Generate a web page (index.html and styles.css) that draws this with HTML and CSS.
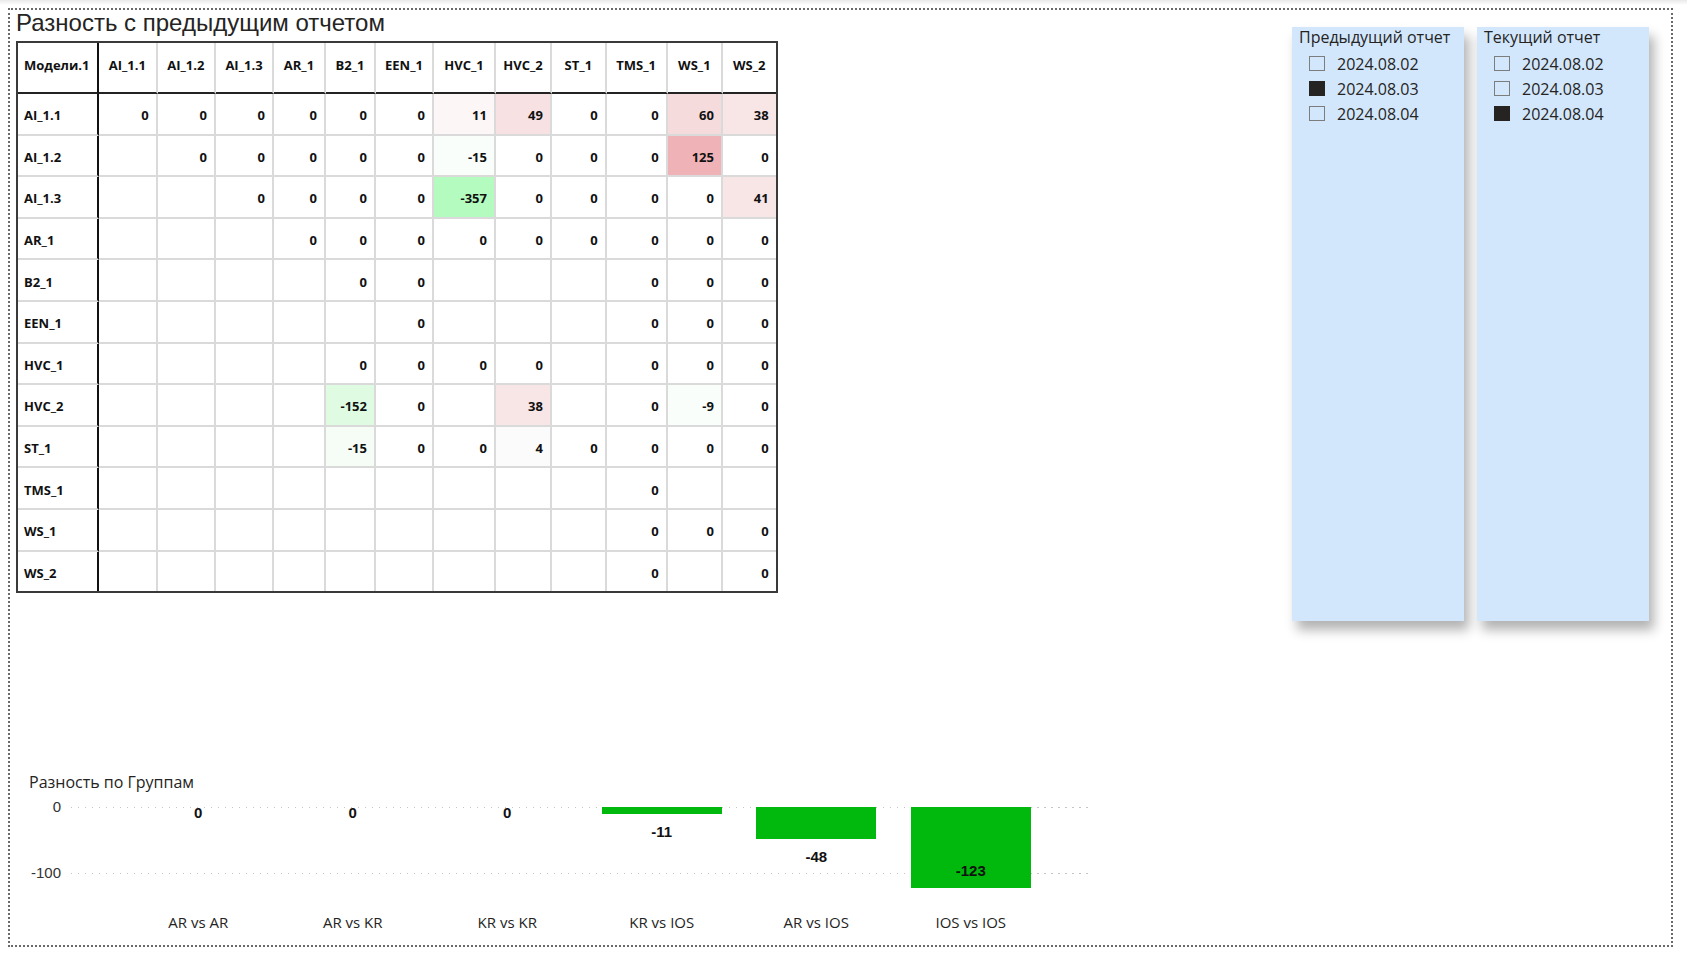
FILE: index.html
```html
<!DOCTYPE html>
<html lang="ru">
<head>
<meta charset="utf-8">
<title>Разность с предыдущим отчетом</title>
<link rel="stylesheet" href="styles.css">
</head>
<body>
<div class="canvas">
  <div class="top">
    <section class="matrix-visual">
      <h1 class="visual-title">Разность с предыдущим отчетом</h1>
      <div class="matrix">
        <div class="h rh">Модели.1</div><div class="h">AI_1.1</div><div class="h">AI_1.2</div><div class="h">AI_1.3</div><div class="h">AR_1</div><div class="h">B2_1</div><div class="h">EEN_1</div><div class="h">HVC_1</div><div class="h">HVC_2</div><div class="h">ST_1</div><div class="h">TMS_1</div><div class="h">WS_1</div><div class="h last">WS_2</div>

        <div class="rh">AI_1.1</div><div class="c">0</div><div class="c">0</div><div class="c">0</div><div class="c">0</div><div class="c">0</div><div class="c">0</div><div class="c p1">11</div><div class="c p2">49</div><div class="c">0</div><div class="c">0</div><div class="c p3">60</div><div class="c last p4">38</div>

        <div class="rh">AI_1.2</div><div class="c"></div><div class="c">0</div><div class="c">0</div><div class="c">0</div><div class="c">0</div><div class="c">0</div><div class="c g1">-15</div><div class="c">0</div><div class="c">0</div><div class="c">0</div><div class="c p5">125</div><div class="c last">0</div>

        <div class="rh">AI_1.3</div><div class="c"></div><div class="c"></div><div class="c">0</div><div class="c">0</div><div class="c">0</div><div class="c">0</div><div class="c g2">-357</div><div class="c">0</div><div class="c">0</div><div class="c">0</div><div class="c">0</div><div class="c last p4">41</div>

        <div class="rh">AR_1</div><div class="c"></div><div class="c"></div><div class="c"></div><div class="c">0</div><div class="c">0</div><div class="c">0</div><div class="c">0</div><div class="c">0</div><div class="c">0</div><div class="c">0</div><div class="c">0</div><div class="c last">0</div>

        <div class="rh">B2_1</div><div class="c"></div><div class="c"></div><div class="c"></div><div class="c"></div><div class="c">0</div><div class="c">0</div><div class="c"></div><div class="c"></div><div class="c"></div><div class="c">0</div><div class="c">0</div><div class="c last">0</div>

        <div class="rh">EEN_1</div><div class="c"></div><div class="c"></div><div class="c"></div><div class="c"></div><div class="c"></div><div class="c">0</div><div class="c"></div><div class="c"></div><div class="c"></div><div class="c">0</div><div class="c">0</div><div class="c last">0</div>

        <div class="rh">HVC_1</div><div class="c"></div><div class="c"></div><div class="c"></div><div class="c"></div><div class="c">0</div><div class="c">0</div><div class="c">0</div><div class="c">0</div><div class="c"></div><div class="c">0</div><div class="c">0</div><div class="c last">0</div>

        <div class="rh">HVC_2</div><div class="c"></div><div class="c"></div><div class="c"></div><div class="c"></div><div class="c g3">-152</div><div class="c">0</div><div class="c"></div><div class="c p4">38</div><div class="c"></div><div class="c">0</div><div class="c g1">-9</div><div class="c last">0</div>

        <div class="rh">ST_1</div><div class="c"></div><div class="c"></div><div class="c"></div><div class="c"></div><div class="c g4">-15</div><div class="c">0</div><div class="c">0</div><div class="c n1">4</div><div class="c">0</div><div class="c">0</div><div class="c">0</div><div class="c last">0</div>

        <div class="rh">TMS_1</div><div class="c"></div><div class="c"></div><div class="c"></div><div class="c"></div><div class="c"></div><div class="c"></div><div class="c"></div><div class="c"></div><div class="c"></div><div class="c">0</div><div class="c"></div><div class="c last"></div>

        <div class="rh">WS_1</div><div class="c"></div><div class="c"></div><div class="c"></div><div class="c"></div><div class="c"></div><div class="c"></div><div class="c"></div><div class="c"></div><div class="c"></div><div class="c">0</div><div class="c">0</div><div class="c last">0</div>

        <div class="rh bottom">WS_2</div><div class="c bottom"></div><div class="c bottom"></div><div class="c bottom"></div><div class="c bottom"></div><div class="c bottom"></div><div class="c bottom"></div><div class="c bottom"></div><div class="c bottom"></div><div class="c bottom"></div><div class="c bottom">0</div><div class="c bottom"></div><div class="c last bottom">0</div>
      </div>
    </section>

    <div class="slicers">
      <section class="slicer">
        <h2 class="slicer-title">Предыдущий отчет</h2>
        <ul class="slicer-list">
          <li class="slicer-item"><span class="box"></span>2024.08.02</li>
          <li class="slicer-item"><span class="box checked"></span>2024.08.03</li>
          <li class="slicer-item"><span class="box"></span>2024.08.04</li>
        </ul>
      </section>
      <section class="slicer">
        <h2 class="slicer-title">Текущий отчет</h2>
        <ul class="slicer-list">
          <li class="slicer-item"><span class="box"></span>2024.08.02</li>
          <li class="slicer-item"><span class="box"></span>2024.08.03</li>
          <li class="slicer-item"><span class="box checked"></span>2024.08.04</li>
        </ul>
      </section>
    </div>
  </div>

  <section class="chart">
    <h2 class="chart-title">Разность по Группам</h2>
    <div class="plot-row">
      <div class="y-axis">
        <span class="tick">0</span>
        <span class="tick">-100</span>
      </div>
      <div class="plot">
        <div class="cats">
          <div class="cat">
            <div class="bar-zone"><div class="bar" style="height:0px"></div><span class="val zero">0</span></div>
            <span class="cat-label">AR vs AR</span>
          </div>
          <div class="cat">
            <div class="bar-zone"><div class="bar" style="height:0px"></div><span class="val zero">0</span></div>
            <span class="cat-label">AR vs KR</span>
          </div>
          <div class="cat">
            <div class="bar-zone"><div class="bar" style="height:0px"></div><span class="val zero">0</span></div>
            <span class="cat-label">KR vs KR</span>
          </div>
          <div class="cat">
            <div class="bar-zone"><div class="bar" style="height:7.3px"></div><span class="val">-11</span></div>
            <span class="cat-label">KR vs IOS</span>
          </div>
          <div class="cat">
            <div class="bar-zone"><div class="bar" style="height:31.7px"></div><span class="val">-48</span></div>
            <span class="cat-label">AR vs IOS</span>
          </div>
          <div class="cat">
            <div class="bar-zone"><div class="bar" style="height:81.2px"></div><span class="val inside">-123</span></div>
            <span class="cat-label">IOS vs IOS</span>
          </div>
        </div>
      </div>
    </div>
  </section>
</div>
</body>
</html>
```

FILE: styles.css
```css
html, body {
  margin: 0;
  padding: 0;
}

body {
  background: linear-gradient(to bottom, #e9e9e9 0, #ffffff 5px) no-repeat, #ffffff;
  font-family: "Open Sans", "Noto Sans", sans-serif;
  color: #252423;
}

.canvas {
  margin: 8px;
  width: 1665px;
  height: 939px;
  box-sizing: border-box;
  border: 2px dotted #6a6a6a;
  display: flex;
  flex-direction: column;
}

.top {
  display: flex;
  justify-content: space-between;
  align-items: flex-start;
  padding: 0 22px 0 6px;
}

/* ---------- matrix ---------- */

.visual-title {
  margin: 0 0 5px 0;
  font-family: "Liberation Sans", Arial, sans-serif;
  font-weight: 400;
  font-size: 24px;
  line-height: 26px;
  color: #252423;
}

.matrix {
  display: grid;
  grid-template-columns: 81px 58.7px 58.3px 58px 52px 50px 58px 62px 56px 54.7px 61px 55.3px 52.7px;
  grid-template-rows: 51px repeat(11, 41.6px) 39.6px;
  border: 2px solid #3a3a3a;
  width: max-content;
  font-family: "Open Sans", "Noto Sans", sans-serif;
  font-weight: 700;
  font-size: 13px;
  color: #111111;
}

.matrix > div {
  box-sizing: border-box;
  border-right: 2px solid #dadada;
  border-bottom: 2px solid #dadada;
  display: flex;
  align-items: center;
  white-space: nowrap;
  padding-top: 3px;
}

.matrix .h {
  justify-content: center;
  border-bottom: 2px solid #232323;
  padding-top: 0;
  padding-bottom: 5px;
}

.matrix .rh {
  padding-left: 6px;
  border-right: 2px solid #111111;
}

.matrix .h.rh {
  justify-content: flex-start;
}

.matrix .c {
  justify-content: flex-end;
  padding-right: 7px;
}

.matrix .last {
  border-right: none;
}

.matrix .bottom {
  border-bottom: none;
}

.p1 { background: #fdf6f6; }
.p2 { background: #f7e1e3; }
.p3 { background: #f6dbdd; }
.p4 { background: #f8e5e6; }
.p5 { background: #efb3b7; }
.g1 { background: #fafefa; }
.g2 { background: #b4fbc0; }
.g3 { background: #dffce3; }
.g4 { background: #f6fdf6; }
.n1 { background: #fcfbfb; }

/* ---------- slicers ---------- */

.slicers {
  display: flex;
  gap: 13px;
  margin-top: 17px;
}

.slicer {
  width: 172px;
  height: 594px;
  box-sizing: border-box;
  padding-left: 7px;
  background: #d3e7fc;
  box-shadow: 5px 9px 11px rgba(0, 0, 0, 0.3);
}

.slicer-title {
  margin: 0;
  font-weight: 400;
  font-size: 16px;
  line-height: 20px;
  color: #252423;
}

.slicer-list {
  list-style: none;
  margin: 4px 0 0 10px;
  padding: 0;
}

.slicer-item {
  display: flex;
  align-items: center;
  gap: 12px;
  height: 25px;
  font-size: 16px;
  color: #252423;
}

.box {
  width: 16px;
  height: 15px;
  box-sizing: border-box;
  border: 1px solid #7d7d7d;
  flex: none;
}

.box.checked {
  background: #252423;
  border-color: #252423;
}

/* ---------- chart ---------- */

.chart {
  margin-top: 151px;
  padding-left: 19px;
}

.chart-title {
  margin: 0;
  font-weight: 400;
  font-size: 16px;
  line-height: 20px;
  color: #252423;
}

.plot-row {
  display: flex;
  gap: 10px;
  margin-top: 15px;
}

.y-axis {
  width: 32px;
  margin-top: -10px;
  display: flex;
  flex-direction: column;
  align-items: flex-end;
  gap: 46px;
  font-family: "Liberation Sans", Arial, sans-serif;
  font-size: 15px;
  line-height: 20px;
  color: #333333;
}

.plot {
  position: relative;
  z-index: 0;
  width: 1019px;
}

.plot::before,
.plot::after {
  content: "";
  position: absolute;
  left: 0;
  right: 0;
  height: 1px;
  z-index: -1;
  background-image: repeating-linear-gradient(to right, #c4c4c4 0 1.5px, transparent 1.5px 7px);
}

.plot::before { top: 0; }
.plot::after { top: 66px; }

.cats {
  display: flex;
  margin-left: 50px;
}

.cat {
  width: 154.5px;
  display: flex;
  flex-direction: column;
  align-items: center;
}

.bar-zone {
  height: 98px;
  display: flex;
  flex-direction: column;
  align-items: center;
}

.bar {
  width: 120px;
  background: #01b80c;
}

.val {
  margin-top: 10px;
  font-family: "Liberation Sans", Arial, sans-serif;
  font-weight: 700;
  font-size: 15px;
  line-height: 16px;
  color: #111111;
}

.val.zero {
  margin-top: -2px;
}

.val.inside {
  margin-top: -25px;
}

.cat-label {
  margin-top: 7px;
  font-size: 15px;
  line-height: 20px;
  color: #252423;
}
```
